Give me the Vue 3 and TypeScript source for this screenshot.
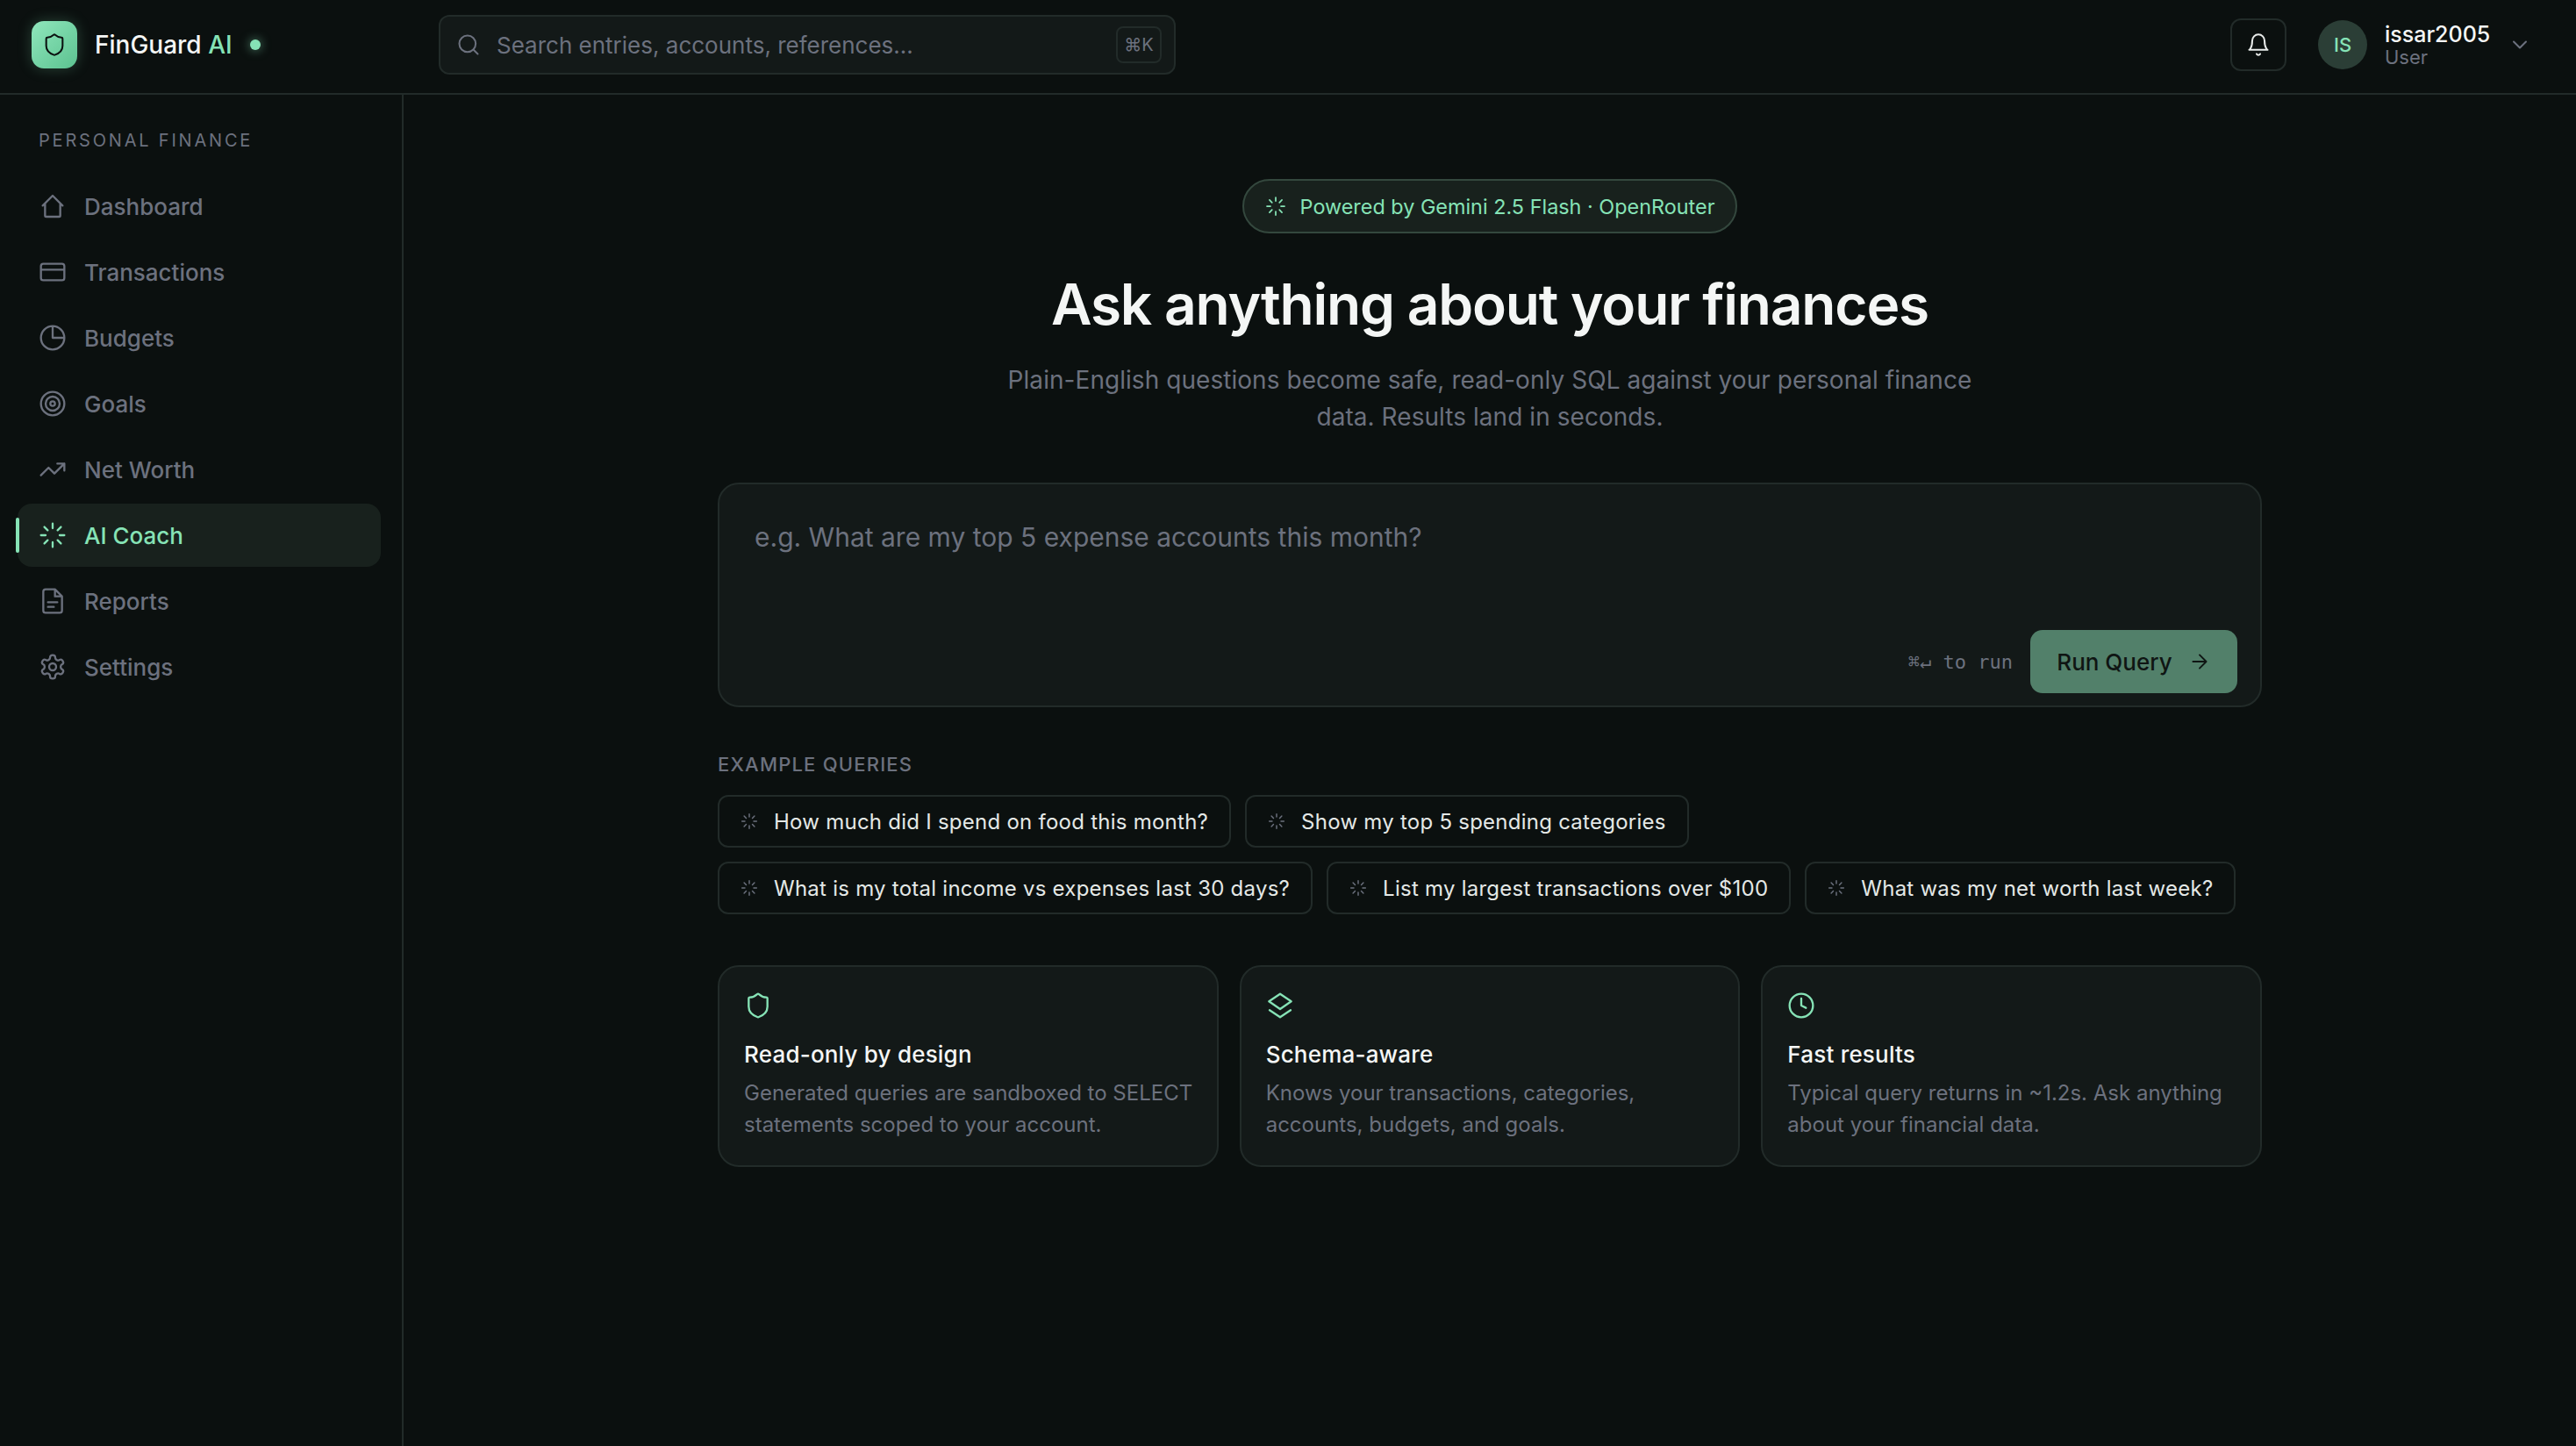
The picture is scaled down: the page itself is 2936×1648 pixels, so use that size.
<script setup lang="ts">
const navItems = [
  { label: "Dashboard", icon: "home" },
  { label: "Transactions", icon: "card" },
  { label: "Budgets", icon: "pie" },
  { label: "Goals", icon: "target" },
  { label: "Net Worth", icon: "trend" },
  { label: "AI Coach", icon: "loader", active: true },
  { label: "Reports", icon: "file" },
  { label: "Settings", icon: "gear" },
];

const chipRows = [
  ["How much did I spend on food this month?", "Show my top 5 spending categories"],
  [
    "What is my total income vs expenses last 30 days?",
    "List my largest transactions over $100",
    "What was my net worth last week?",
  ],
];

const cards = [
  {
    icon: "shield",
    title: "Read-only by design",
    text: "Generated queries are sandboxed to SELECT statements scoped to your account.",
  },
  {
    icon: "layers",
    title: "Schema-aware",
    text: "Knows your transactions, categories, accounts, budgets, and goals.",
  },
  {
    icon: "clock",
    title: "Fast results",
    text: "Typical query returns in ~1.2s. Ask anything about your financial data.",
  },
];

const shieldPath =
  "M20 13c0 5-3.5 7.5-7.66 8.95a1 1 0 0 1-.67-.01C7.5 20.5 4 18 4 13V6a1 1 0 0 1 1-1c2 0 4.5-1.2 6.24-2.72a1.17 1.17 0 0 1 1.52 0C14.51 3.81 17 5 19 5a1 1 0 0 1 1 1z";
const gearPath =
  "M12.22 2h-.44a2 2 0 0 0-2 2v.18a2 2 0 0 1-1 1.73l-.43.25a2 2 0 0 1-2 0l-.15-.08a2 2 0 0 0-2.73.73l-.22.38a2 2 0 0 0 .73 2.73l.15.1a2 2 0 0 1 1 1.72v.51a2 2 0 0 1-1 1.74l-.15.09a2 2 0 0 0-.73 2.73l.22.38a2 2 0 0 0 2.73.73l.15-.08a2 2 0 0 1 2 0l.43.25a2 2 0 0 1 1 1.73V20a2 2 0 0 0 2 2h.44a2 2 0 0 0 2-2v-.18a2 2 0 0 1 1-1.73l.43-.25a2 2 0 0 1 2 0l.15.08a2 2 0 0 0 2.73-.73l.22-.39a2 2 0 0 0-.73-2.73l-.15-.08a2 2 0 0 1-1-1.74v-.5a2 2 0 0 1 1-1.74l.15-.09a2 2 0 0 0 .73-2.73l-.22-.38a2 2 0 0 0-2.73-.73l-.15.08a2 2 0 0 1-2 0l-.43-.25a2 2 0 0 1-1-1.73V4a2 2 0 0 0-2-2z";
const loaderPath =
  "M12 2v4M12 18v4M4.93 4.93l2.83 2.83M16.24 16.24l2.83 2.83M2 12h4M18 12h4M4.93 19.07l2.83-2.83M16.24 7.76l2.83-2.83";

const paths: Record<string, string> = {
  home: "M3.5 11.5 12 3l8.5 8.5M5.5 10v10a1 1 0 0 0 1 1h11a1 1 0 0 0 1-1V10",
  card: "M4 5h16a2 2 0 0 1 2 2v10a2 2 0 0 1-2 2H4a2 2 0 0 1-2-2V7a2 2 0 0 1 2-2zM2 10h20",
  pie: "M12 2a10 10 0 1 0 10 10A10 10 0 0 0 12 2zM12 2v10h10",
  trend: "M2 17l6.5-6.5 5 5L22 7M16 7h6v6",
  file: "M14 2H6a2 2 0 0 0-2 2v16a2 2 0 0 0 2 2h12a2 2 0 0 0 2-2V8zM14 2v6h6M8 13h8M8 17h5",
  gear: gearPath,
  loader: loaderPath,
  shield: shieldPath,
  layers: "M12 2 2.5 8.5 12 15l9.5-6.5zM3 16l9 6 9-6",
};
</script>

<template>
  <div class="app">
    <header class="topbar">
      <div class="brand">
        <div class="logo">
          <svg viewBox="0 0 24 24" class="logo-icon"><path :d="shieldPath" /></svg>
        </div>
        <span class="brand-name">FinGuard <em>AI</em></span>
        <span class="dot"></span>
      </div>
      <div class="search">
        <svg viewBox="0 0 24 24" class="search-icon">
          <circle cx="11" cy="11" r="8" />
          <path d="m21 21-4.3-4.3" />
        </svg>
        <span class="search-text">Search entries, accounts, references...</span>
        <span class="kbd">⌘K</span>
      </div>
      <div class="top-right">
        <button class="bell">
          <svg viewBox="0 0 24 24">
            <path d="M6 8a6 6 0 0 1 12 0c0 7 3 9 3 9H3s3-2 3-9" />
            <path d="M10.3 21a1.94 1.94 0 0 0 3.4 0" />
          </svg>
        </button>
        <div class="avatar">IS</div>
        <div class="user">
          <span class="user-name">issar2005</span>
          <span class="user-role">User</span>
        </div>
        <svg viewBox="0 0 24 24" class="chevron"><path d="m6 9 6 6 6-6" /></svg>
      </div>
    </header>

    <div class="body">
      <aside class="sidebar">
        <div class="side-label">PERSONAL FINANCE</div>
        <nav class="nav">
          <div
            v-for="item in navItems"
            :key="item.label"
            class="nav-item"
            :class="{ active: item.active }"
          >
            <svg viewBox="0 0 24 24" class="nav-icon">
              <template v-if="item.icon == 'target'">
                <circle cx="12" cy="12" r="10" />
                <circle cx="12" cy="12" r="6" />
                <circle cx="12" cy="12" r="2" />
              </template>
              <template v-else>
                <path :d="paths[item.icon]" />
                <circle v-if="item.icon == 'gear'" cx="12" cy="12" r="3" />
              </template>
            </svg>
            <span>{{ item.label }}</span>
          </div>
        </nav>
      </aside>

      <main class="main">
        <div class="column">
          <div class="pill">
            <svg viewBox="0 0 24 24" class="pill-icon"><path :d="loaderPath" /></svg>
            <span>Powered by Gemini 2.5 Flash · OpenRouter</span>
          </div>
          <h1 class="title">Ask anything about your finances</h1>
          <p class="subtitle">
            Plain-English questions become safe, read-only SQL against your personal finance
            data. Results land in seconds.
          </p>

          <div class="query">
            <div class="placeholder">e.g. What are my top 5 expense accounts this month?</div>
            <div class="query-foot">
              <span class="hint">⌘↵ to run</span>
              <button class="run">
                <span>Run Query</span>
                <svg viewBox="0 0 24 24"><path d="M5 12h14M12 5l7 7-7 7" /></svg>
              </button>
            </div>
          </div>

          <div class="examples-label">EXAMPLE QUERIES</div>
          <div class="chips">
            <div v-for="(row, i) in chipRows" :key="i" class="chip-row">
              <div v-for="chip in row" :key="chip" class="chip">
                <svg viewBox="0 0 24 24" class="chip-icon"><path :d="loaderPath" /></svg>
                <span>{{ chip }}</span>
              </div>
            </div>
          </div>

          <div class="cards">
            <div v-for="card in cards" :key="card.title" class="card">
              <svg viewBox="0 0 24 24" class="card-icon">
                <template v-if="card.icon == 'clock'">
                  <circle cx="12" cy="12" r="10" />
                  <path d="M12 6v6l4 2" />
                </template>
                <path v-else :d="paths[card.icon]" />
              </svg>
              <div class="card-title">{{ card.title }}</div>
              <div class="card-text">{{ card.text }}</div>
            </div>
          </div>
        </div>
      </main>
    </div>
  </div>
</template>

<style>
html,
body {
  margin: 0;
  background: #0b100f;
}
</style>

<style scoped>
.app {
  width: 2936px;
  height: 1648px;
  display: flex;
  flex-direction: column;
  overflow: hidden;
  background: #0b100f;
  color: #f4f6f5;
  font-family: Inter, "Noto Sans", sans-serif;
}
svg {
  fill: none;
  stroke: currentColor;
  stroke-width: 1.75;
  stroke-linecap: round;
  stroke-linejoin: round;
  flex: none;
}

/* top bar */
.topbar {
  height: 108px;
  box-sizing: border-box;
  border-bottom: 2px solid #222b29;
  display: flex;
  align-items: center;
  padding: 0 36px 4px;
}
.brand {
  width: 464px;
  display: flex;
  align-items: center;
}
.logo {
  width: 52px;
  height: 54px;
  border-radius: 14px;
  background: linear-gradient(135deg, #8fe6bc, #5cc290);
  box-shadow: 0 0 16px rgba(127, 224, 176, 0.25);
  display: flex;
  align-items: center;
  justify-content: center;
  color: #0b100f;
}
.logo-icon {
  width: 28px;
  height: 28px;
}
.brand-name {
  margin-left: 20px;
  font-size: 28px;
  font-weight: 500;
}
.brand-name em {
  font-style: normal;
  color: #86e3b6;
}
.dot {
  width: 12px;
  height: 12px;
  margin-left: 20px;
  border-radius: 50%;
  background: #86e3b6;
  box-shadow: 0 0 12px rgba(134, 227, 182, 0.6);
}
.search {
  width: 840px;
  height: 68px;
  box-sizing: border-box;
  border: 2px solid #222b29;
  border-radius: 12px;
  background: #131918;
  display: flex;
  align-items: center;
  padding: 0 14px 0 18px;
  color: #6c717e;
}
.search-icon {
  width: 28px;
  height: 28px;
}
.search-text {
  margin-left: 18px;
  font-size: 26px;
  flex: 1;
}
.kbd {
  width: 52px;
  height: 42px;
  box-sizing: border-box;
  border: 2px solid #222b29;
  border-radius: 8px;
  display: flex;
  align-items: center;
  justify-content: center;
  font-size: 20px;
}
.top-right {
  margin-left: auto;
  display: flex;
  align-items: center;
}
.bell {
  width: 64px;
  height: 60px;
  box-sizing: border-box;
  border: 2px solid #222b29;
  border-radius: 12px;
  background: transparent;
  color: #e8ebea;
  padding: 0;
  display: flex;
  align-items: center;
  justify-content: center;
}
.bell svg {
  width: 28px;
  height: 28px;
}
.avatar {
  width: 56px;
  height: 56px;
  margin-left: 36px;
  border-radius: 50%;
  background: #2b3e36;
  color: #86e3b6;
  font-size: 22px;
  font-weight: 500;
  display: flex;
  align-items: center;
  justify-content: center;
}
.user {
  margin-left: 20px;
  display: flex;
  flex-direction: column;
  width: 130px;
}
.user-name {
  font-size: 25px;
  line-height: 28px;
  font-weight: 500;
}
.user-role {
  font-size: 22px;
  line-height: 24px;
  color: #6c717e;
}
.chevron {
  width: 28px;
  height: 28px;
  margin-left: 10px;
  margin-right: 14px;
  color: #6c717e;
}

/* sidebar */
.body {
  flex: 1;
  display: flex;
  min-height: 0;
}
.sidebar {
  width: 460px;
  box-sizing: border-box;
  border-right: 2px solid #222b29;
  padding: 39px 24px 0 20px;
}
.side-label {
  margin-left: 24px;
  font-size: 20px;
  line-height: 26px;
  letter-spacing: 2.8px;
  color: #6c717e;
}
.nav {
  margin-top: 26px;
  display: flex;
  flex-direction: column;
  gap: 3px;
}
.nav-item {
  position: relative;
  height: 72px;
  box-sizing: border-box;
  padding-left: 24px;
  border-radius: 16px;
  display: flex;
  align-items: center;
  gap: 20px;
  font-size: 26px;
  font-weight: 500;
  color: #6c717e;
}
.nav-item.active {
  background: #18211d;
  color: #86e3b6;
}
.nav-item.active::before {
  content: "";
  position: absolute;
  left: -2px;
  top: 16px;
  bottom: 16px;
  width: 4px;
  border-radius: 2px;
  background: #86e3b6;
}
.nav-icon {
  width: 32px;
  height: 32px;
}

/* main column */
.main {
  flex: 1;
  display: flex;
  justify-content: center;
  min-width: 0;
}
.column {
  width: 1760px;
  display: flex;
  flex-direction: column;
  padding-top: 96px;
}
.pill {
  align-self: center;
  height: 62px;
  box-sizing: border-box;
  padding: 0 24px;
  border: 2px solid #34483e;
  border-radius: 31px;
  background: #18211d;
  color: #86e3b6;
  font-size: 23.4px;
  font-weight: 400;
  display: flex;
  align-items: center;
  gap: 16px;
}
.pill-icon {
  width: 24px;
  height: 24px;
}
.title {
  margin: 41px 0 0;
  text-align: center;
  font-size: 64px;
  line-height: 80px;
  font-weight: 600;
  letter-spacing: -1.2px;
}
.subtitle {
  margin: 25px auto 0;
  width: 1120px;
  text-align: center;
  font-size: 28px;
  letter-spacing: 0.05px;
  line-height: 42px;
  color: #6c717e;
}
.query {
  margin-top: 54px;
  height: 256px;
  box-sizing: border-box;
  border: 2px solid #222b29;
  border-radius: 24px;
  background: #131918;
  padding: 40px 26px 14px 40px;
  display: flex;
  flex-direction: column;
}
.placeholder {
  font-size: 30px;
  line-height: 40px;
  color: #6c717e;
}
.query-foot {
  margin-top: auto;
  display: flex;
  justify-content: flex-end;
  align-items: center;
  gap: 20px;
}
.hint {
  font-family: "DejaVu Sans Mono", monospace;
  font-size: 22px;
  color: #6c717e;
}
.run {
  width: 236px;
  height: 72px;
  border: none;
  border-radius: 14px;
  background: #52806a;
  color: #0f1513;
  font-family: inherit;
  font-size: 26px;
  font-weight: 500;
  padding: 0;
  display: flex;
  align-items: center;
  justify-content: center;
  gap: 18px;
}
.run svg {
  width: 26px;
  height: 26px;
}
.examples-label {
  margin-top: 52px;
  font-size: 22px;
  line-height: 26px;
  font-weight: 500;
  letter-spacing: 1.2px;
  color: #6c717e;
}
.chips {
  margin-top: 22px;
  display: flex;
  flex-direction: column;
  gap: 16px;
}
.chip-row {
  display: flex;
  gap: 16px;
}
.chip {
  height: 60px;
  box-sizing: border-box;
  border: 2px solid #222b29;
  border-radius: 12px;
  padding: 0 24px;
  display: flex;
  align-items: center;
  gap: 18px;
  font-size: 24px;
  letter-spacing: 0.25px;
  white-space: nowrap;
  color: #e4e8e6;
}
.chip-icon {
  width: 20px;
  height: 20px;
  color: #6c717e;
}
.cards {
  margin-top: 58px;
  display: grid;
  grid-template-columns: repeat(3, 1fr);
  gap: 24px;
}
.card {
  height: 230px;
  box-sizing: border-box;
  border: 2px solid #222b29;
  border-radius: 24px;
  background: #131918;
  padding: 28px 20px 0 28px;
}
.card-icon {
  display: block;
  width: 32px;
  height: 32px;
  color: #86e3b6;
}
.card-title {
  margin-top: 22px;
  font-size: 26px;
  letter-spacing: 0.2px;
  line-height: 36px;
  font-weight: 500;
}
.card-text {
  margin-top: 8px;
  font-size: 24px;
  line-height: 36px;
  color: #6c717e;
}
</style>
